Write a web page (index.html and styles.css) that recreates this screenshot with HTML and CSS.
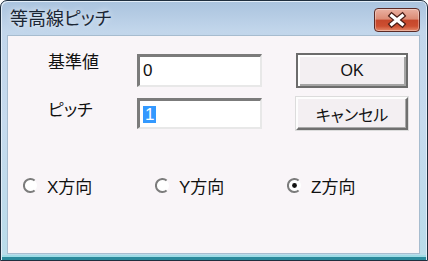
FILE: index.html
```html
<!DOCTYPE html>
<html lang="ja">
<head>
    <meta charset="UTF-8">
    <title>等高線ピッチ</title>
    <link rel="stylesheet" href="styles.css">
</head>
<body>
    <div class="window">
        <div class="titlebar">
            <span class="title">等高線ピッチ</span>
            <button class="close" type="button" aria-label="閉じる">
                <svg width="46" height="24" viewBox="0 0 46 24">
                    <path d="M17.5 7.5 L28.5 16.5 M28.5 7.5 L17.5 16.5" stroke="#4a1d16" stroke-width="6" stroke-linecap="square" fill="none"/>
                    <path d="M17.5 7.5 L28.5 16.5 M28.5 7.5 L17.5 16.5" stroke="#ffffff" stroke-width="3.4" stroke-linecap="square" fill="none"/>
                </svg>
            </button>
        </div>

        <div class="client">
            <!-- Value fields -->
            <div class="form">
                <span class="label label-base">基準値</span>
                <div class="field field-base">0</div>
                <button class="btn btn-default" type="button">OK</button>

                <span class="label label-pitch">ピッチ</span>
                <div class="field field-pitch"><span class="selected">1</span></div>
                <button class="btn" type="button">キャンセル</button>
            </div>

            <!-- Direction -->
            <div class="radios">
                <div class="radio">
                    <svg class="radio-dot" width="15" height="15" viewBox="0 0 15 15">
                        <circle cx="7.5" cy="7.5" r="6.5" fill="#ffffff"/>
                        <path d="M11.6 2.5 A6.5 6.5 0 1 0 11.6 12.5" stroke="#7c7c7c" stroke-width="2" fill="none"/>
                    </svg>
                    <span class="radio-text">X方向</span>
                </div>
                <div class="radio">
                    <svg class="radio-dot" width="15" height="15" viewBox="0 0 15 15">
                        <circle cx="7.5" cy="7.5" r="6.5" fill="#ffffff"/>
                        <path d="M11.6 2.5 A6.5 6.5 0 1 0 11.6 12.5" stroke="#7c7c7c" stroke-width="2" fill="none"/>
                    </svg>
                    <span class="radio-text">Y方向</span>
                </div>
                <div class="radio">
                    <svg class="radio-dot" width="15" height="15" viewBox="0 0 15 15">
                        <circle cx="7.5" cy="7.5" r="6.5" fill="#ffffff"/>
                        <path d="M11.6 2.5 A6.5 6.5 0 1 0 11.6 12.5" stroke="#7c7c7c" stroke-width="2" fill="none"/>
                        <circle cx="7.5" cy="7.5" r="2.4" fill="#111111"/>
                    </svg>
                    <span class="radio-text">Z方向</span>
                </div>
            </div>
        </div>
    </div>
</body>
</html>
```

FILE: styles.css
```css
:root {
    --frame-dark: #1f2e3e;
    --client-bg: #f9f5f8;
    --text-color: #111;
}

* {
    margin: 0;
    padding: 0;
    box-sizing: border-box;
    font-family: "Liberation Sans", "Noto Sans CJK JP", sans-serif;
}

body {
    background: #ffffff;
}

.window {
    width: 428px;
    height: 261px;
    display: flex;
    flex-direction: column;
    padding: 0 7px 6px 6px;
    border: 1px solid var(--frame-dark);
    border-radius: 7px 7px 0 0;
    background: linear-gradient(to bottom, #aac3de 0, #c2d6eb 30px, #c6daee 120px, #b9dcea 100%);
    box-shadow: inset 1px 1px 0 #e2edf8, inset -1px 0 0 #e2edf8, inset 0 -3px 0 #2b8a9c, inset 0 -5px 0 #9fdbe6;
}

.titlebar {
    height: 34px;
    display: flex;
    align-items: flex-start;
    justify-content: space-between;
}

.title {
    margin: 7px 0 0 3px;
    font-size: 18px;
    line-height: 22px;
    color: #1b2634;
    font-feature-settings: "palt";
    text-shadow: 0 0 6px rgba(255, 255, 255, 0.8);
}

.close {
    width: 46px;
    height: 24px;
    margin-top: 7px;
    border: 1px solid #5b2a25;
    border-radius: 4px;
    background: linear-gradient(to bottom, #eab1a2 0%, #dc8c76 45%, #c6472b 52%, #cd4f31 78%, #e58b6c 100%);
    box-shadow: inset 0 0 0 1px rgba(255, 255, 255, 0.35);
    display: flex;
    align-items: center;
    justify-content: center;
}

.close svg {
    display: block;
}

.client {
    flex: 1;
    background: var(--client-bg);
    border: 1px solid #a7bccf;
    padding: 17px 0 0 40px;
}

.form {
    display: grid;
    grid-template-columns: 89px 159px 112px;
    grid-template-rows: 35px 33px;
    row-gap: 9px;
}

.label {
    align-self: start;
    font-size: 17px;
    line-height: 17px;
    color: var(--text-color);
    font-feature-settings: "palt";
}

.label-base {
    margin-top: 1px;
}

.label-pitch {
    margin-top: 5px;
}

.field {
    width: 125px;
    align-self: center;
    display: flex;
    align-items: center;
    padding-left: 3px;
    background: #ffffff;
    border-top: 3px solid #7b7b7b;
    border-left: 3px solid #7b7b7b;
    border-right: 2px solid #e8e8e8;
    border-bottom: 2px solid #e8e8e8;
    font-size: 17px;
    color: var(--text-color);
}

.field-base {
    height: 33px;
}

.field-pitch {
    height: 31px;
}

.selected {
    background: #3399ff;
    color: #ffffff;
    line-height: 17px;
    padding: 0 2px;
}

.btn {
    width: 112px;
    background: #f3eff2;
    border-top: 2px solid #fdfdfd;
    border-left: 2px solid #fdfdfd;
    border-right: 2px solid #6f6f6f;
    border-bottom: 2px solid #6f6f6f;
    box-shadow: inset -1px -1px 0 #a8a8a8, 0 0 0 1px #dcdcdc;
    font-size: 16px;
    color: var(--text-color);
    font-feature-settings: "palt";
    cursor: pointer;
}

.btn-default {
    border: 2px solid #6c6c6c;
    box-shadow: inset 2px 2px 0 #ffffff, inset -2px -2px 0 #a4a4a4;
}

.radios {
    display: flex;
    margin: 45px 0 0 -25px;
}

.radio {
    width: 137px;
    height: 20px;
    display: flex;
    align-items: center;
    gap: 9px;
}

.radio-dot {
    display: block;
    flex-shrink: 0;
}

.radio-text {
    padding-top: 4px;
    font-size: 17px;
    line-height: 17px;
    color: var(--text-color);
}
```
